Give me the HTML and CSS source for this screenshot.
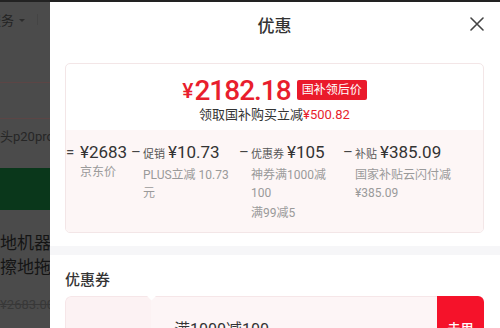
FILE: index.html
```html
<!DOCTYPE html>
<html lang="zh-CN">
<head>
<meta charset="utf-8">
<link rel="stylesheet" href="styles.css">
</head>
<body>
<div class="top-edge"></div>
<div class="screen">
  <div class="page">
    <div class="nav"><span class="nav-text">服务</span><span class="caret"></span><span class="vbar"></span></div>
    <div class="search"></div>
    <div class="crumb">镜头p20pro</div>
    <div class="banner"></div>
    <div class="ptitle">地机器人<br>擦地拖地</div>
    <div class="oldprice">¥2683.00</div>
  </div>
  <div class="panel">
    <header class="panel-head">
      <h2 class="panel-title">优惠</h2>
      <button class="close" aria-label="关闭">
        <svg width="14" height="14" viewBox="0 0 14 14"><path d="M1 1L13 13M13 1L1 13" stroke="#444" stroke-width="1.6" fill="none" stroke-linecap="round"/></svg>
      </button>
    </header>
    <section class="price-card">
      <div class="price-top">
        <div class="final"><span class="yen">¥</span><span class="num">2182.18</span><span class="badge">国补领后价</span></div>
        <div class="save">领取国补购买立减<em>¥500.82</em></div>
      </div>
      <div class="breakdown">
        <div class="item">
          <span class="op">=</span>
          <div class="body">
            <div class="main"><span class="amt">¥2683</span></div>
            <div class="sub">京东价</div>
          </div>
        </div>
        <div class="item">
          <span class="op">–</span>
          <div class="body">
            <div class="main"><span class="label">促销</span><span class="amt">¥10.73</span></div>
            <div class="sub">PLUS立减 10.73<br>元</div>
          </div>
        </div>
        <div class="item">
          <span class="op">–</span>
          <div class="body">
            <div class="main"><span class="label">优惠券</span><span class="amt">¥105</span></div>
            <div class="sub">神券满1000减<br>100</div>
            <div class="sub extra">满99减5</div>
          </div>
        </div>
        <div class="item">
          <span class="op">–</span>
          <div class="body">
            <div class="main"><span class="label">补贴</span><span class="amt">¥385.09</span></div>
            <div class="sub">国家补贴云闪付减<br>¥385.09</div>
          </div>
        </div>
      </div>
    </section>
    <div class="band"></div>
    <section class="coupons">
      <h3 class="sec-title">优惠券</h3>
      <div class="coupon">
        <div class="c-left"></div>
        <div class="c-mid">满1000减100</div>
        <div class="c-btn">去用</div>
        <span class="notch"></span>
      </div>
    </section>
  </div>
</div>
</body>
</html>
```

FILE: styles.css
```css
* { box-sizing: border-box; }
html, body { margin: 0; padding: 0; }
body {
  width: 500px;
  height: 328px;
  overflow: hidden;
  font-family: Roboto, "Noto Sans CJK SC", sans-serif;
  color: #333;
  background: #4c4c4c;
}
.top-edge { height: 2px; background: #222; }
.screen { display: flex; height: 326px; }

/* dimmed page behind the sheet */
.page {
  width: 50px;
  flex: none;
  overflow: hidden;
  background-color: #4b4b4b;
  color: #232323;
  white-space: nowrap;
}
.nav { height: 34px; display: flex; align-items: center; font-size: 13px; }
.nav-text { margin-left: -12px; }
.caret {
  width: 0; height: 0; margin-left: 5px; margin-top: 2px;
  border-left: 3px solid transparent; border-right: 3px solid transparent;
  border-top: 3px solid #2c2c2c;
}
.vbar { width: 1px; height: 11px; background: #444; margin-left: 12px; }
.search {
  margin-top: 46px;
  height: 37px;
  border-top: 1px solid #5c4545;
  border-bottom: 1px solid #5c4545;
}
.crumb { margin-top: 8px; margin-left: -13px; font-size: 13px; line-height: 20px; color: #262626; }
.banner { margin-top: 21px; height: 42px; background-color: #0a371b; }
.ptitle { margin-top: 21px; font-size: 17px; line-height: 24px; color: #141414; }
.oldprice { margin-top: 18px; font-size: 13px; color: #383838; text-decoration: line-through; }

/* sheet */
.panel {
  flex: 1;
  background: #fff;
  padding: 0 16px 0 15px;
}
.panel-head {
  height: 44px;
  display: flex;
  align-items: center;
  justify-content: center;
  position: relative;
}
.panel-title { margin: 0; font-size: 17px; font-weight: 500; color: #333; }
.close {
  position: absolute; right: 0; top: 15px;
  border: 0; background: none; padding: 0; width: 14px; height: 14px;
  display: flex;
}

.price-card {
  margin-top: 17px;
  border: 1px solid #f3e6e7;
  border-radius: 5px;
  overflow: hidden;
}
.price-top { padding: 10px 0 6px; text-align: center; }
.final {
  display: flex; align-items: center; justify-content: center;
  height: 32px; color: #e81e2d;
}
.yen { font-size: 21px; font-weight: 500; margin-right: 1px; margin-top: 2px; }
.num { font-size: 28px; font-weight: 500; letter-spacing: -1px; }
.badge {
  margin-left: 6px;
  background: #ea1a2b; color: #fff;
  font-size: 12px; line-height: 20px; height: 20px;
  padding: 0 5px; border-radius: 2px;
}
.save { font-size: 13px; line-height: 18px; color: #333; }
.save em { font-style: normal; color: #e81e2d; }

.breakdown {
  background: #fdf6f6;
  display: grid;
  grid-template-columns: 65px 108px 104px 1fr;
  padding: 11px 0 10px;
}
.item { display: flex; }
.op { width: 12px; flex: none; font-size: 15px; line-height: 22px; color: #444; }
.item:first-child .op { width: 14px; }
.main { line-height: 22px; white-space: nowrap; display: flex; align-items: baseline; }
.label { font-size: 11px; color: #555; margin-right: 3px; }
.amt { font-size: 17px; color: #333; }
.sub { font-size: 12px; line-height: 18px; color: #9a9a9a; white-space: nowrap; }
.sub.extra { margin-top: 2px; }

.band { margin: 13px -16px 0 -15px; height: 9px; background: #f6f6f8; }

.sec-title { margin: 14px 0 0; font-size: 15px; font-weight: 500; line-height: 22px; color: #333; }
.coupon {
  margin-top: 5px;
  height: 76px;
  display: flex;
  border-radius: 6px;
  overflow: hidden;
  position: relative;
}
.c-left { width: 86px; background: #fcf2f3; border: 1px solid #f6e6e8; border-right: 0; border-radius: 6px 0 0 6px; }
.c-mid {
  flex: 1; background: #fdf5f6;
  border-top: 1px solid #f6e6e8;
  padding: 22px 0 0 23px;
  font-size: 16px; line-height: 22px; color: #333;
}
.c-btn {
  width: 47px; background: #f5122a; color: #fff;
  font-size: 13px; font-weight: 500;
  display: flex; justify-content: center; padding-top: 22px;
}
.notch {
  position: absolute; left: 83px; top: -4px;
  width: 7px; height: 7px; background: #fff;
  transform: rotate(45deg);
}
```
